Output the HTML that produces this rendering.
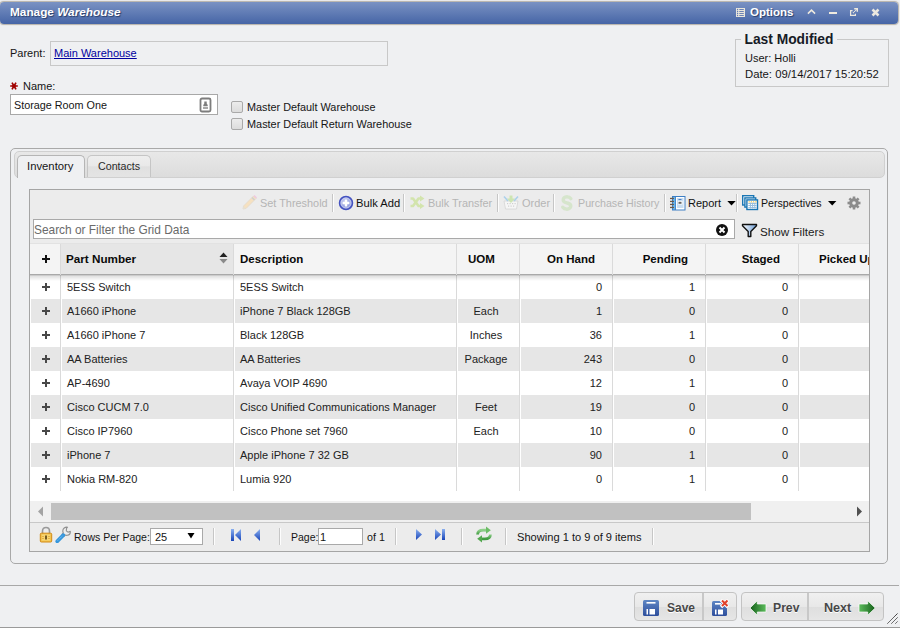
<!DOCTYPE html>
<html><head><meta charset="utf-8">
<style>
*{box-sizing:border-box}
html,body{margin:0;padding:0}
body{width:900px;height:628px;position:relative;overflow:hidden;background:#eff0f2;font-family:"Liberation Sans",sans-serif;color:#151515;font-size:11px}
.a{position:absolute;white-space:nowrap}
.t{position:absolute;white-space:nowrap;line-height:14px}
#title{left:0;top:2px;width:898px;height:22px;border-radius:4px;background:linear-gradient(#7a92c3,#4665a6);box-shadow:0 0 1px 0.6px rgba(110,100,80,0.45)}
.tt{color:#fff;font-weight:bold;text-shadow:1px 1px 1px #2a3f6b}
.box{position:absolute;border:1px solid #c8c8c8}
.sep{position:absolute;width:2px;background:linear-gradient(to right,#c6c6c6 50%,#fdfdfd 50%)}
.gtxt{font-size:11px;color:#222}
.hdr{position:absolute;top:243px;height:32px;background:#f4f4f4;border-right:1px solid #d9d9d9}
.htx{position:absolute;top:252px;font-weight:bold;font-size:11.5px;color:#0a0a0a;line-height:14px}
.row{position:absolute;left:30px;width:839px;height:24px}
.cell{position:absolute;line-height:24px;font-size:11px;color:#222;white-space:nowrap}
.vl{position:absolute;top:275px;height:216px;width:1px;background:#dadada}
.tb{color:#111}
.dis{color:#b5b5b5}
.hl{position:absolute;top:244px;height:31px;width:1px;background:#dadada}
.pl{position:absolute;left:42px;width:8px;height:8px;background:linear-gradient(#484848,#484848) center/8px 2px no-repeat,linear-gradient(#484848,#484848) center/2px 8px no-repeat}
.bt{font-size:12px;font-weight:bold;color:#474747;text-shadow:0 1px 0 #fff}
.r{text-align:right}
</style></head><body>

<!-- title bar -->
<div id="title" class="a"></div>
<div class="t tt" style="left:10px;top:4.7px;font-size:11.8px">Manage <i>Warehouse</i></div>
<div class="t tt" style="left:750px;top:4.7px;font-size:11.5px">Options</div>

<!-- parent -->
<div class="t" style="left:10px;top:46px;font-size:11px">Parent:</div>
<div class="box" style="left:50px;top:41px;width:338px;height:25px"></div>
<div class="t" style="left:54px;top:46px;font-size:11px;color:#0000a0;text-decoration:underline">Main Warehouse</div>

<!-- name -->
<div class="t" style="left:23px;top:79px;font-size:11px">Name:</div>
<svg class="a" style="left:9px;top:81px" width="10" height="10" viewBox="0 0 10 10"><path d="M1.2 5 H8.8 M3 1.6 L7 8.4 M7 1.6 L3 8.4" stroke="#a00000" stroke-width="1.7"/><circle cx="5" cy="5" r="1.8" fill="#a00000"/></svg>
<div class="a" style="left:10px;top:94px;width:208px;height:21px;background:#fff;border:1px solid #a8a8a8"></div>
<div class="t" style="left:14px;top:98px;font-size:10.8px">Storage Room One</div>

<!-- checkboxes -->
<div class="a" style="left:231px;top:101px;width:12px;height:12px;border:1px solid #a9a9a9;border-radius:2px;background:linear-gradient(#ececec,#dcdcdc)"></div>
<div class="a" style="left:231px;top:118px;width:12px;height:12px;border:1px solid #a9a9a9;border-radius:2px;background:linear-gradient(#ececec,#dcdcdc)"></div>
<div class="t" style="left:247px;top:100px;font-size:10.85px">Master Default Warehouse</div>
<div class="t" style="left:247px;top:117px;font-size:10.9px">Master Default Return Warehouse</div>

<!-- last modified -->
<div class="box" style="left:735px;top:39px;width:154px;height:48px"></div>
<div class="t" style="left:741px;top:33px;padding:0 3.5px;background:#eff0f2;font-size:13.8px;font-weight:bold;color:#161a26">Last Modified</div>
<div class="t" style="left:745px;top:50.5px;font-size:11px">User: Holli</div>
<div class="t" style="left:745px;top:67px;font-size:11.3px">Date: 09/14/2017 15:20:52</div>

<!-- outer tab panel -->
<div class="a" style="left:10px;top:148px;width:878px;height:416px;border:1px solid #a9a9a9;border-radius:5px"></div>
<div class="a" style="left:14px;top:151px;width:871px;height:27px;border:1px solid #d0d0d0;border-radius:5px;background:linear-gradient(#e8e8e8,#dcdcdc)"></div>
<div class="a" style="left:17px;top:155px;width:68px;height:23px;border:1px solid #b5b5b5;border-bottom:none;border-radius:5px 5px 0 0;background:#eff0f2"></div>
<div class="a" style="left:87px;top:155px;width:64px;height:22px;border:1px solid #c5c5c5;border-bottom:none;border-radius:5px 5px 0 0;background:linear-gradient(#eeeeee 0%,#e9e9e9 45%,#e0e0e0 52%,#e4e4e4 100%)"></div>
<div class="t" style="left:27px;top:159px;font-size:11.3px">Inventory</div>
<div class="t" style="left:98px;top:159px;font-size:10.7px;color:#2a2a2a">Contacts</div>

<!-- grid -->
<div class="a" style="left:29px;top:189px;width:841px;height:363px;border:1px solid #a5a5a5;background:#ececec"></div>


<!-- toolbar -->
<div class="t tb dis" style="left:260px;top:196px;font-size:10.9px">Set Threshold</div>
<div class="sep" style="left:332px;top:194px;height:18px"></div>
<div class="t tb" style="left:356px;top:196px;font-size:11.2px">Bulk Add</div>
<div class="sep" style="left:403px;top:194px;height:18px"></div>
<div class="t tb dis" style="left:428px;top:196px;font-size:10.9px">Bulk Transfer</div>
<div class="sep" style="left:497px;top:194px;height:18px"></div>
<div class="t tb dis" style="left:522px;top:196px;font-size:11px">Order</div>
<div class="sep" style="left:553px;top:194px;height:18px"></div>
<div class="t tb dis" style="left:578px;top:196px;font-size:10.7px">Purchase History</div>
<div class="sep" style="left:664px;top:194px;height:18px"></div>
<div class="t tb" style="left:688px;top:196px;font-size:11px">Report</div>
<div class="sep" style="left:736px;top:194px;height:18px"></div>
<div class="t tb" style="left:761px;top:196px;font-size:10.6px">Perspectives</div>
<!-- search -->
<div class="a" style="left:33px;top:219px;width:702px;height:20px;background:#fff;border:1px solid #a9a9a9"></div>
<div class="t" style="left:34px;top:223px;font-size:11.9px;color:#6a6a6a">Search or Filter the Grid Data</div>
<div class="t" style="left:760px;top:225px;font-size:11.7px;color:#222">Show Filters</div>

<!-- header -->
<div class="a" style="left:30px;top:243px;width:839px;height:32px;background:#f4f4f4;border-top:1px solid #e2e2e2;border-bottom:1px solid #a9a9a9"></div>
<div class="a" style="left:61px;top:244px;width:172px;height:30px;background:#e6e6e6"></div>
<div class="hl" style="left:60px"></div>
<div class="hl" style="left:233px"></div>
<div class="hl" style="left:456px"></div>
<div class="hl" style="left:519px"></div>
<div class="hl" style="left:612px"></div>
<div class="hl" style="left:705px"></div>
<div class="hl" style="left:798px"></div>
<div class="htx" style="left:66px;font-size:11.7px">Part Number</div>
<div class="htx" style="left:240px">Description</div>
<div class="htx" style="left:468px">UOM</div>
<div class="htx" style="right:305px">On Hand</div>
<div class="htx" style="right:212px">Pending</div>
<div class="htx" style="right:120px">Staged</div>
<div class="a" style="left:799px;top:244px;width:70px;height:30px;overflow:hidden"><div class="htx" style="left:20px;top:8px">Picked Up</div></div>
<!-- rows -->
<div class="a" style="left:30px;top:275px;width:839px;height:226px;background:#fff"></div>
<div class="a" style="left:31px;top:299px;width:29px;height:24px;background:#e6e6e6"></div>
<div class="a" style="left:62px;top:299px;width:171px;height:24px;background:#e6e6e6"></div>
<div class="a" style="left:235px;top:299px;width:221px;height:24px;background:#e6e6e6"></div>
<div class="a" style="left:458px;top:299px;width:61px;height:24px;background:#e6e6e6"></div>
<div class="a" style="left:521px;top:299px;width:91px;height:24px;background:#e6e6e6"></div>
<div class="a" style="left:614px;top:299px;width:91px;height:24px;background:#e6e6e6"></div>
<div class="a" style="left:707px;top:299px;width:91px;height:24px;background:#e6e6e6"></div>
<div class="a" style="left:800px;top:299px;width:69px;height:24px;background:#e6e6e6"></div>
<div class="a" style="left:31px;top:347px;width:29px;height:24px;background:#e6e6e6"></div>
<div class="a" style="left:62px;top:347px;width:171px;height:24px;background:#e6e6e6"></div>
<div class="a" style="left:235px;top:347px;width:221px;height:24px;background:#e6e6e6"></div>
<div class="a" style="left:458px;top:347px;width:61px;height:24px;background:#e6e6e6"></div>
<div class="a" style="left:521px;top:347px;width:91px;height:24px;background:#e6e6e6"></div>
<div class="a" style="left:614px;top:347px;width:91px;height:24px;background:#e6e6e6"></div>
<div class="a" style="left:707px;top:347px;width:91px;height:24px;background:#e6e6e6"></div>
<div class="a" style="left:800px;top:347px;width:69px;height:24px;background:#e6e6e6"></div>
<div class="a" style="left:31px;top:395px;width:29px;height:24px;background:#e6e6e6"></div>
<div class="a" style="left:62px;top:395px;width:171px;height:24px;background:#e6e6e6"></div>
<div class="a" style="left:235px;top:395px;width:221px;height:24px;background:#e6e6e6"></div>
<div class="a" style="left:458px;top:395px;width:61px;height:24px;background:#e6e6e6"></div>
<div class="a" style="left:521px;top:395px;width:91px;height:24px;background:#e6e6e6"></div>
<div class="a" style="left:614px;top:395px;width:91px;height:24px;background:#e6e6e6"></div>
<div class="a" style="left:707px;top:395px;width:91px;height:24px;background:#e6e6e6"></div>
<div class="a" style="left:800px;top:395px;width:69px;height:24px;background:#e6e6e6"></div>
<div class="a" style="left:31px;top:443px;width:29px;height:24px;background:#e6e6e6"></div>
<div class="a" style="left:62px;top:443px;width:171px;height:24px;background:#e6e6e6"></div>
<div class="a" style="left:235px;top:443px;width:221px;height:24px;background:#e6e6e6"></div>
<div class="a" style="left:458px;top:443px;width:61px;height:24px;background:#e6e6e6"></div>
<div class="a" style="left:521px;top:443px;width:91px;height:24px;background:#e6e6e6"></div>
<div class="a" style="left:614px;top:443px;width:91px;height:24px;background:#e6e6e6"></div>
<div class="a" style="left:707px;top:443px;width:91px;height:24px;background:#e6e6e6"></div>
<div class="a" style="left:800px;top:443px;width:69px;height:24px;background:#e6e6e6"></div>
<div class="vl" style="left:60px"></div>
<div class="vl" style="left:233px"></div>
<div class="vl" style="left:456px"></div>
<div class="vl" style="left:519px"></div>
<div class="vl" style="left:612px"></div>
<div class="vl" style="left:705px"></div>
<div class="vl" style="left:798px"></div>
<div class="pl" style="top:283px"></div>
<div class="cell" style="left:67px;top:275px">5ESS Switch</div>
<div class="cell" style="left:240px;top:275px">5ESS Switch</div>
<div class="cell r" style="right:298px;top:275px">0</div>
<div class="cell r" style="right:205px;top:275px">1</div>
<div class="cell r" style="right:112px;top:275px">0</div>
<div class="pl" style="top:307px"></div>
<div class="cell" style="left:67px;top:299px">A1660 iPhone</div>
<div class="cell" style="left:240px;top:299px">iPhone 7 Black 128GB</div>
<div class="cell c" style="left:455px;width:62px;top:299px;text-align:center">Each</div>
<div class="cell r" style="right:298px;top:299px">1</div>
<div class="cell r" style="right:205px;top:299px">0</div>
<div class="cell r" style="right:112px;top:299px">0</div>
<div class="pl" style="top:331px"></div>
<div class="cell" style="left:67px;top:323px">A1660 iPhone 7</div>
<div class="cell" style="left:240px;top:323px">Black 128GB</div>
<div class="cell c" style="left:455px;width:62px;top:323px;text-align:center">Inches</div>
<div class="cell r" style="right:298px;top:323px">36</div>
<div class="cell r" style="right:205px;top:323px">1</div>
<div class="cell r" style="right:112px;top:323px">0</div>
<div class="pl" style="top:355px"></div>
<div class="cell" style="left:67px;top:347px">AA Batteries</div>
<div class="cell" style="left:240px;top:347px">AA Batteries</div>
<div class="cell c" style="left:455px;width:62px;top:347px;text-align:center">Package</div>
<div class="cell r" style="right:298px;top:347px">243</div>
<div class="cell r" style="right:205px;top:347px">0</div>
<div class="cell r" style="right:112px;top:347px">0</div>
<div class="pl" style="top:379px"></div>
<div class="cell" style="left:67px;top:371px">AP-4690</div>
<div class="cell" style="left:240px;top:371px">Avaya VOIP 4690</div>
<div class="cell r" style="right:298px;top:371px">12</div>
<div class="cell r" style="right:205px;top:371px">1</div>
<div class="cell r" style="right:112px;top:371px">0</div>
<div class="pl" style="top:403px"></div>
<div class="cell" style="left:67px;top:395px">Cisco CUCM 7.0</div>
<div class="cell" style="left:240px;top:395px">Cisco Unified Communications Manager</div>
<div class="cell c" style="left:455px;width:62px;top:395px;text-align:center">Feet</div>
<div class="cell r" style="right:298px;top:395px">19</div>
<div class="cell r" style="right:205px;top:395px">0</div>
<div class="cell r" style="right:112px;top:395px">0</div>
<div class="pl" style="top:427px"></div>
<div class="cell" style="left:67px;top:419px">Cisco IP7960</div>
<div class="cell" style="left:240px;top:419px">Cisco Phone set 7960</div>
<div class="cell c" style="left:455px;width:62px;top:419px;text-align:center">Each</div>
<div class="cell r" style="right:298px;top:419px">10</div>
<div class="cell r" style="right:205px;top:419px">0</div>
<div class="cell r" style="right:112px;top:419px">0</div>
<div class="pl" style="top:451px"></div>
<div class="cell" style="left:67px;top:443px">iPhone 7</div>
<div class="cell" style="left:240px;top:443px">Apple iPhone 7 32 GB</div>
<div class="cell r" style="right:298px;top:443px">90</div>
<div class="cell r" style="right:205px;top:443px">1</div>
<div class="cell r" style="right:112px;top:443px">0</div>
<div class="pl" style="top:475px"></div>
<div class="cell" style="left:67px;top:467px">Nokia RM-820</div>
<div class="cell" style="left:240px;top:467px">Lumia 920</div>
<div class="cell r" style="right:298px;top:467px">0</div>
<div class="cell r" style="right:205px;top:467px">1</div>
<div class="cell r" style="right:112px;top:467px">0</div>
<div class="a" style="left:30px;top:275px;width:839px;height:1px;background:rgba(0,0,0,0.2)"></div><div class="a" style="left:30px;top:276px;width:839px;height:5px;background:linear-gradient(rgba(0,0,0,0.12),rgba(0,0,0,0))"></div>
<!-- scrollbar -->
<div class="a" style="left:30px;top:501px;width:839px;height:22px;background:#f0f0f0;border-bottom:1px solid #c8c8c8"></div>
<div class="a" style="left:51px;top:503px;width:700px;height:17px;background:#c1c1c1"></div>

<!-- pager -->
<div class="sep" style="left:213px;top:528px;height:17px"></div>
<div class="sep" style="left:279px;top:528px;height:17px"></div>
<div class="sep" style="left:395px;top:528px;height:17px"></div>
<div class="sep" style="left:461px;top:528px;height:17px"></div>
<div class="sep" style="left:505px;top:528px;height:17px"></div>
<div class="sep" style="left:652px;top:528px;height:17px"></div>
<div class="t" style="left:74px;top:530px;font-size:10.5px">Rows Per Page:</div>
<div class="a" style="left:150px;top:528px;width:53px;height:17px;background:#fff;border:1px solid #a9a9a9"></div>
<div class="t" style="left:155px;top:530px;font-size:11px">25</div>
<div class="t" style="left:291px;top:530px;font-size:10.5px">Page:</div>
<div class="a" style="left:318px;top:528px;width:45px;height:17px;background:#fff;border:1px solid #a9a9a9"></div>
<div class="t" style="left:320px;top:530px;font-size:11px">1</div>
<div class="t" style="left:367px;top:530px;font-size:10.7px">of 1</div>
<div class="t" style="left:517px;top:530px;font-size:11.1px">Showing 1 to 9 of 9 items</div>

<!-- bottom -->
<div class="a" style="left:0;top:585px;width:899px;height:1px;background:#a8a8a8"></div>
<div class="a" style="left:634px;top:592px;width:103px;height:29px;border:1px solid #c3c3c3;border-radius:4px;background:linear-gradient(#f0f0f0 0%,#e8e8e8 50%,#dedede 51%,#e6e6e6 100%)"></div>
<div class="a" style="left:702px;top:593px;width:2px;height:27px;background:#c8c8c8"></div>
<div class="a" style="left:741px;top:592px;width:143px;height:29px;border:1px solid #c3c3c3;border-radius:4px;background:linear-gradient(#f0f0f0 0%,#e8e8e8 50%,#dedede 51%,#e6e6e6 100%)"></div>
<div class="a" style="left:807px;top:593px;width:2px;height:27px;background:#c8c8c8"></div>
<div class="t bt" style="left:667px;top:600.5px">Save</div>
<div class="t bt" style="left:773px;top:600.5px;font-size:12.2px">Prev</div>
<div class="t bt" style="left:824px;top:600.5px;font-size:12.6px">Next</div>
<div class="a" style="left:0;top:627px;width:900px;height:1px;background:#9a9a9a"></div>

<!-- ICONS -->
<!-- title icons -->
<svg class="a" style="left:736px;top:8px" width="9" height="9" viewBox="0 0 9 9"><rect x="0" y="0" width="9" height="9" fill="#e9e6dc"/><g fill="#5f77b0"><circle cx="1.6" cy="1.5" r="0.65"/><circle cx="1.6" cy="3.5" r="0.65"/><circle cx="1.6" cy="5.5" r="0.65"/><circle cx="1.6" cy="7.5" r="0.65"/></g><g stroke="#5f77b0" stroke-width="0.9"><path d="M3.3 1.5 H7.8 M3.3 3.5 H7.8 M3.3 5.5 H7.8 M3.3 7.5 H7.8"/></g></svg>
<svg class="a" style="left:807px;top:9px" width="9" height="7" viewBox="0 0 9 7"><path d="M0.9 4.6 L4.5 1.1 L8.1 4.6" fill="none" stroke="#efeadf" stroke-width="1.5"/></svg>
<div class="a" style="left:829px;top:12px;width:8px;height:2.4px;background:#efeadf"></div>
<svg class="a" style="left:849px;top:7px" width="10" height="10" viewBox="0 0 10 10"><path d="M3.6 3.6 H1.6 V8.4 H6.4 V6.8" fill="none" stroke="#ede9df" stroke-width="1.25"/><path d="M5.2 1.7 H8.3 V4.8" fill="none" stroke="#ede9df" stroke-width="1.4"/><path d="M6.5 1 H9 V3.5Z" fill="#ede9df"/><path d="M4 6 L8 2" stroke="#ede9df" stroke-width="1.2" stroke-dasharray="1.1 0.5"/></svg>
<svg class="a" style="left:871px;top:8px" width="9" height="9" viewBox="0 0 9 9"><path d="M1.5 1.5 L7.5 7.5 M7.5 1.5 L1.5 7.5" fill="none" stroke="#ebe8e0" stroke-width="2.5"/></svg>

<!-- name input icon -->
<svg class="a" style="left:199px;top:97px" width="13" height="16" viewBox="0 0 13 16"><rect x="1.5" y="1.5" width="10" height="13" rx="1.5" fill="#fff" stroke="#7d7d7d" stroke-width="1.8"/><path d="M5.3 4.5 h2.4 v2 l1 1.5 v1.2 h-4.4 v-1.2 l1 -1.5z" fill="#7d7d7d"/><rect x="4" y="10" width="5" height="2" fill="#a8a8a8"/></svg>

<!-- toolbar icons -->
<svg class="a" style="left:241px;top:194px" width="17" height="17" viewBox="0 0 17 17"><path d="M2 15 L2.5 12 L12.5 2 L15 4.5 L5 14.5 Z" fill="#f6e1c0" stroke="#e2d8ca" stroke-width="0.8"/><path d="M11 3.5 L13.5 6" stroke="#cfcfcf" stroke-width="1.5"/><path d="M12.5 2 L13.5 1 L16 3.5 L15 4.5Z" fill="#efc6de"/><path d="M2 15 L2.5 12 L5 14.5Z" fill="#e6e0d2"/></svg>
<svg class="a" style="left:338px;top:195px" width="16" height="16" viewBox="0 0 16 16"><defs><radialGradient id="ba" cx="0.4" cy="0.35" r="0.7"><stop offset="0" stop-color="#c6ccf0"/><stop offset="1" stop-color="#7a88d6"/></radialGradient></defs><circle cx="8" cy="8" r="6.5" fill="url(#ba)" stroke="#4452c0" stroke-width="1.5"/><circle cx="8" cy="8" r="4.9" fill="none" stroke="#d8dcf4" stroke-width="0.7"/><path d="M8 4.6 V11.4 M4.6 8 H11.4" stroke="#fff" stroke-width="2.4"/></svg>
<svg class="a" style="left:409px;top:195px" width="16" height="15" viewBox="0 0 16 15"><g fill="none" stroke="#d3e4ad" stroke-width="2.6" stroke-linejoin="round"><path d="M1.5 3.5 H4 L9.5 11 H12"/><path d="M1.5 11 H4 L9.5 3.5 H12"/></g><path d="M11 0.5 L15.5 3.5 L11 6.5Z M11 8 L15.5 11 L11 14Z" fill="#d3e4ad"/></svg>
<svg class="a" style="left:503px;top:195px" width="16" height="15" viewBox="0 0 16 15"><path d="M1 6 H15 L13.5 14 H2.5Z" fill="#f6f6f6" stroke="#d8d8d8" stroke-width="0.9"/><g fill="#cfcfcf"><rect x="4" y="8" width="1.2" height="1.2"/><rect x="6.5" y="8" width="1.2" height="1.2"/><rect x="9" y="8" width="1.2" height="1.2"/><rect x="11.5" y="8" width="1.2" height="1.2"/><rect x="5" y="10.5" width="1.2" height="1.2"/><rect x="7.5" y="10.5" width="1.2" height="1.2"/><rect x="10" y="10.5" width="1.2" height="1.2"/></g><path d="M1 1.5 L5 6 M15 1.5 L11 6" stroke="#acd0ea" stroke-width="1.6"/><path d="M6.5 0.5 h3 v3 h2.5 L8 8 L4 3.5 h2.5Z" fill="#cde5b2"/></svg>
<svg class="a" style="left:561px;top:195px" width="12" height="16" viewBox="0 0 12 16"><path d="M9.8 3.6 C9 2.4 7.6 1.9 6 1.9 C3.6 1.9 2.2 3.1 2.2 4.9 C2.2 7.1 4.6 7.5 6.3 8 C8.2 8.5 9.8 9 9.8 11 C9.8 12.9 8.1 14.1 6 14.1 C4.1 14.1 2.6 13.4 1.8 12.2" fill="none" stroke="#d6e5cc" stroke-width="3.4" stroke-linecap="round"/><path d="M6 0.5 V2 M6 14 V15.5" stroke="#d6e5cc" stroke-width="2.4"/></svg>
<svg class="a" style="left:669px;top:195px" width="17" height="16" viewBox="0 0 17 16"><rect x="3" y="1" width="13.5" height="14.5" fill="#3e7fc4"/><rect x="4" y="2" width="2.2" height="12.5" fill="#6ab6ec"/><rect x="7" y="2" width="8.5" height="12.5" fill="#fff"/><rect x="8" y="3" width="6.5" height="10" fill="#c9def2"/><rect x="9" y="6" width="4.5" height="3.5" fill="#fff"/><rect x="9.5" y="6.8" width="3" height="2" fill="#666"/><rect x="9.5" y="4" width="3" height="1" fill="#4a7ec0"/><g fill="#6b5a4a"><rect x="1" y="2.8" width="4" height="1.3"/><rect x="1" y="5.8" width="4" height="1.3"/><rect x="1" y="8.8" width="4" height="1.3"/><rect x="1" y="11.8" width="4" height="1.3"/></g></svg>
<svg class="a" style="left:741px;top:194px" width="18" height="17" viewBox="0 0 18 17"><g fill="#fff" stroke="#1a76b4" stroke-width="1.4"><rect x="1.7" y="1.7" width="11" height="9.3"/><rect x="3.9" y="3.9" width="10.8" height="9.2"/><rect x="5.9" y="5.9" width="10.6" height="9.6"/></g><g fill="#f5b81c"><rect x="7.6" y="7.4" width="1.2" height="1"/><rect x="9.8" y="7.4" width="1.2" height="1"/><rect x="12" y="7.4" width="1.2" height="1"/><rect x="14.2" y="7.4" width="1.2" height="1"/></g><g fill="#98bede"><rect x="7.3" y="9" width="8.3" height="1"/><rect x="7.3" y="11" width="8.3" height="1"/><rect x="7.3" y="13" width="8.3" height="0.9"/><rect x="8.9" y="8.5" width="1" height="6"/><rect x="11.1" y="8.5" width="1" height="6"/><rect x="13.3" y="8.5" width="1" height="6"/></g></svg>
<svg class="a" style="left:727px;top:201px" width="9" height="5" viewBox="0 0 9 5"><path d="M0.3 0 H8.7 L4.5 4.6Z" fill="#000"/></svg>
<svg class="a" style="left:828px;top:201px" width="9" height="5" viewBox="0 0 9 5"><path d="M0 0 H8.4 L4.2 4.6Z" fill="#000"/></svg>
<svg class="a" style="left:847px;top:195.5px" width="14" height="14" viewBox="0 0 14 14"><g fill="#8c8c8c"><circle cx="7" cy="7" r="4.8"/><g transform="translate(7 7)"><rect x="-1.3" y="-6.5" width="2.6" height="13"/><rect x="-1.3" y="-6.5" width="2.6" height="13" transform="rotate(45)"/><rect x="-1.3" y="-6.5" width="2.6" height="13" transform="rotate(90)"/><rect x="-1.3" y="-6.5" width="2.6" height="13" transform="rotate(135)"/></g></g><circle cx="7" cy="7" r="1.8" fill="#ececec"/></svg>

<!-- search clear, funnel -->
<svg class="a" style="left:715px;top:223px" width="14" height="14" viewBox="0 0 14 14"><circle cx="7" cy="7" r="6" fill="#111"/><path d="M4.5 4.5 L9.5 9.5 M9.5 4.5 L4.5 9.5" stroke="#fff" stroke-width="2"/></svg>
<svg class="a" style="left:741px;top:223px" width="17" height="15" viewBox="0 0 17 15"><defs><linearGradient id="fg" x1="0" x2="1"><stop offset="0" stop-color="#fff"/><stop offset="1" stop-color="#6d9fd9"/></linearGradient></defs><path d="M1.5 1.5 H15.5 V2.8 L9.8 8.5 V13.5 H7.2 V8.5 L1.5 2.8Z" fill="url(#fg)" stroke="#111" stroke-width="1.4" stroke-linejoin="round"/></svg>

<!-- header + and sort -->
<svg class="a" style="left:42px;top:255px" width="8" height="8" viewBox="0 0 8 8"><path d="M4 0 V8 M0 4 H8" stroke="#111" stroke-width="2"/></svg>
<svg class="a" style="left:219px;top:252px" width="9" height="12" viewBox="0 0 9 12"><path d="M0.5 5 L4.5 0.5 L8.5 5Z" fill="#222"/><path d="M0.5 7 L4.5 11.5 L8.5 7Z" fill="#8a8a8a"/></svg>

<!-- scrollbar arrows -->
<svg class="a" style="left:37px;top:506px" width="7" height="11" viewBox="0 0 7 11"><path d="M6 0.5 V10.5 L1 5.5Z" fill="#a3a3a3"/></svg>
<svg class="a" style="left:856px;top:506px" width="7" height="11" viewBox="0 0 7 11"><path d="M1 0.5 V10.5 L6 5.5Z" fill="#505050"/></svg>

<!-- pager icons -->
<svg class="a" style="left:39px;top:526px" width="14" height="17" viewBox="0 0 14 17"><path d="M3.5 8 V5 C3.5 2.5 5 1.5 7 1.5 C9 1.5 10.5 2.5 10.5 5 V8" fill="none" stroke="#9a9a9a" stroke-width="1.6"/><rect x="1.3" y="7.2" width="11.4" height="8.8" rx="1" fill="#f3c451" stroke="#d28a14" stroke-width="1"/><rect x="3" y="8.5" width="8" height="6" fill="#f7d572"/><rect x="6.2" y="9.5" width="1.6" height="4" fill="#553c10"/><g fill="#e0a83a"><rect x="3" y="10" width="2" height="0.8"/><rect x="3" y="12" width="2" height="0.8"/><rect x="9" y="10" width="2" height="0.8"/><rect x="9" y="12" width="2" height="0.8"/></g></svg>
<svg class="a" style="left:55px;top:526px" width="16" height="17" viewBox="0 0 16 17"><path d="M12.5 1.2 C10 0.8 7.8 2.6 7.8 5 C7.8 5.8 8 6.4 8.3 7 L7 8.3 L9.2 10.2 L10.3 9 C11 9.3 11.7 9.4 12.3 9.3 C14.3 9 15.5 7.3 15.3 5.3 L13 6.2 L11.3 4.8 L11.5 2.5 Z" fill="#ededed" stroke="#8f8f8f" stroke-width="1.1" stroke-linejoin="round"/><path d="M2.3 15.3 L8.2 9.2" stroke="#3596dc" stroke-width="3.8" stroke-linecap="round"/><path d="M2.8 14.5 L7.8 9.5" stroke="#a8d8fa" stroke-width="0.8" stroke-dasharray="1 0.9"/></svg>
<svg class="a" style="left:187px;top:532px" width="8" height="7" viewBox="0 0 8 7"><path d="M0.5 1 H7.5 L4 6.5Z" fill="#000"/></svg>
<svg class="a" style="left:230px;top:528px" width="12" height="14" viewBox="0 0 12 14"><defs><linearGradient id="bl" x1="0" x2="0" y1="0" y2="1"><stop offset="0" stop-color="#8ab0f0"/><stop offset="1" stop-color="#1844b8"/></linearGradient></defs><rect x="1" y="1" width="3" height="12" fill="url(#bl)"/><path d="M11 1 V13 L5 7Z" fill="url(#bl)"/></svg>
<svg class="a" style="left:253px;top:528px" width="8" height="14" viewBox="0 0 8 14"><path d="M7 1 V13 L1 7Z" fill="url(#bl)"/></svg>
<svg class="a" style="left:415px;top:528px" width="8" height="13" viewBox="0 0 8 13"><path d="M1 1 V12 L7 6.5Z" fill="url(#bl)"/></svg>
<svg class="a" style="left:434px;top:528px" width="12" height="13" viewBox="0 0 12 13"><path d="M1 1 V12 L7 6.5Z" fill="url(#bl)"/><rect x="8" y="1" width="3" height="11" fill="url(#bl)"/></svg>
<svg class="a" style="left:475px;top:526px" width="18" height="17" viewBox="0 0 18 17"><defs><linearGradient id="rf" x1="0" x2="0" y1="0" y2="1"><stop offset="0" stop-color="#8fd08a"/><stop offset="1" stop-color="#3f9a3f"/></linearGradient></defs><g fill="none" stroke="url(#rf)" stroke-width="2.8"><path d="M2.6 8.6 C2.6 5.6 5 4.2 8.2 4.2 H11.5"/><path d="M15.4 8.4 C15.4 11.4 13 12.8 9.8 12.8 H6.5"/></g><path d="M11 0.6 L15.8 4.2 L11 7.8Z" fill="#6cbc66"/><path d="M7 9.2 L2.2 12.8 L7 16.4Z" fill="#52a84e"/></svg>

<!-- bottom icons -->
<svg class="a" style="left:643px;top:600px" width="16" height="16" viewBox="0 0 16 16"><defs><linearGradient id="sv" x1="0" x2="0" y1="0" y2="1"><stop offset="0" stop-color="#5f87c4"/><stop offset="1" stop-color="#2d4e9c"/></linearGradient></defs><rect x="0" y="0" width="16" height="16" rx="1.5" fill="url(#sv)"/><rect x="3.5" y="2" width="9" height="1.6" fill="#fff"/><rect x="3.5" y="9" width="1.5" height="5.5" fill="#fff"/><rect x="6.5" y="9" width="5.5" height="5.5" fill="#fff"/></svg>
<svg class="a" style="left:712px;top:599px" width="17" height="17" viewBox="0 0 17 17"><rect x="0" y="2" width="15" height="15" rx="1.5" fill="url(#sv)"/><rect x="3" y="4" width="6" height="1.6" fill="#fff"/><rect x="3" y="10.5" width="1.5" height="5" fill="#fff"/><rect x="6" y="10.5" width="5" height="5" fill="#fff"/><path d="M9 1 L16 8 M16 1 L9 8" stroke="#fff" stroke-width="3.5"/><path d="M10 1.5 L15.5 7 M15.5 1.5 L10 7" stroke="#e0402a" stroke-width="2"/></svg>
<svg class="a" style="left:749px;top:600px" width="18" height="16" viewBox="0 0 18 16"><defs><linearGradient id="gl" x1="0" x2="1"><stop offset="0" stop-color="#16601a"/><stop offset="1" stop-color="#5cbc5c"/></linearGradient><linearGradient id="gr" x1="1" x2="0"><stop offset="0" stop-color="#16601a"/><stop offset="1" stop-color="#5cbc5c"/></linearGradient></defs><path d="M1 8 L8.3 0.8 V4 H17 V12 H8.3 V15.2Z" fill="url(#gl)" stroke="#fff" stroke-width="0.7"/></svg>
<svg class="a" style="left:858px;top:600px" width="18" height="16" viewBox="0 0 18 16"><path d="M17.2 8 L9.7 0.8 V4 H1 V12 H9.7 V15.2Z" fill="url(#gr)" stroke="#fff" stroke-width="0.7"/></svg>
<svg class="a" style="left:886px;top:612px" width="13" height="13" viewBox="0 0 13 13"><path d="M1.5 11.5 L11.5 1.5 M5.5 11.5 L11.5 5.5 M9.5 11.5 L11.5 9.5" stroke="#222" stroke-width="1" stroke-dasharray="1.2 0.3"/></svg>

</body></html>
